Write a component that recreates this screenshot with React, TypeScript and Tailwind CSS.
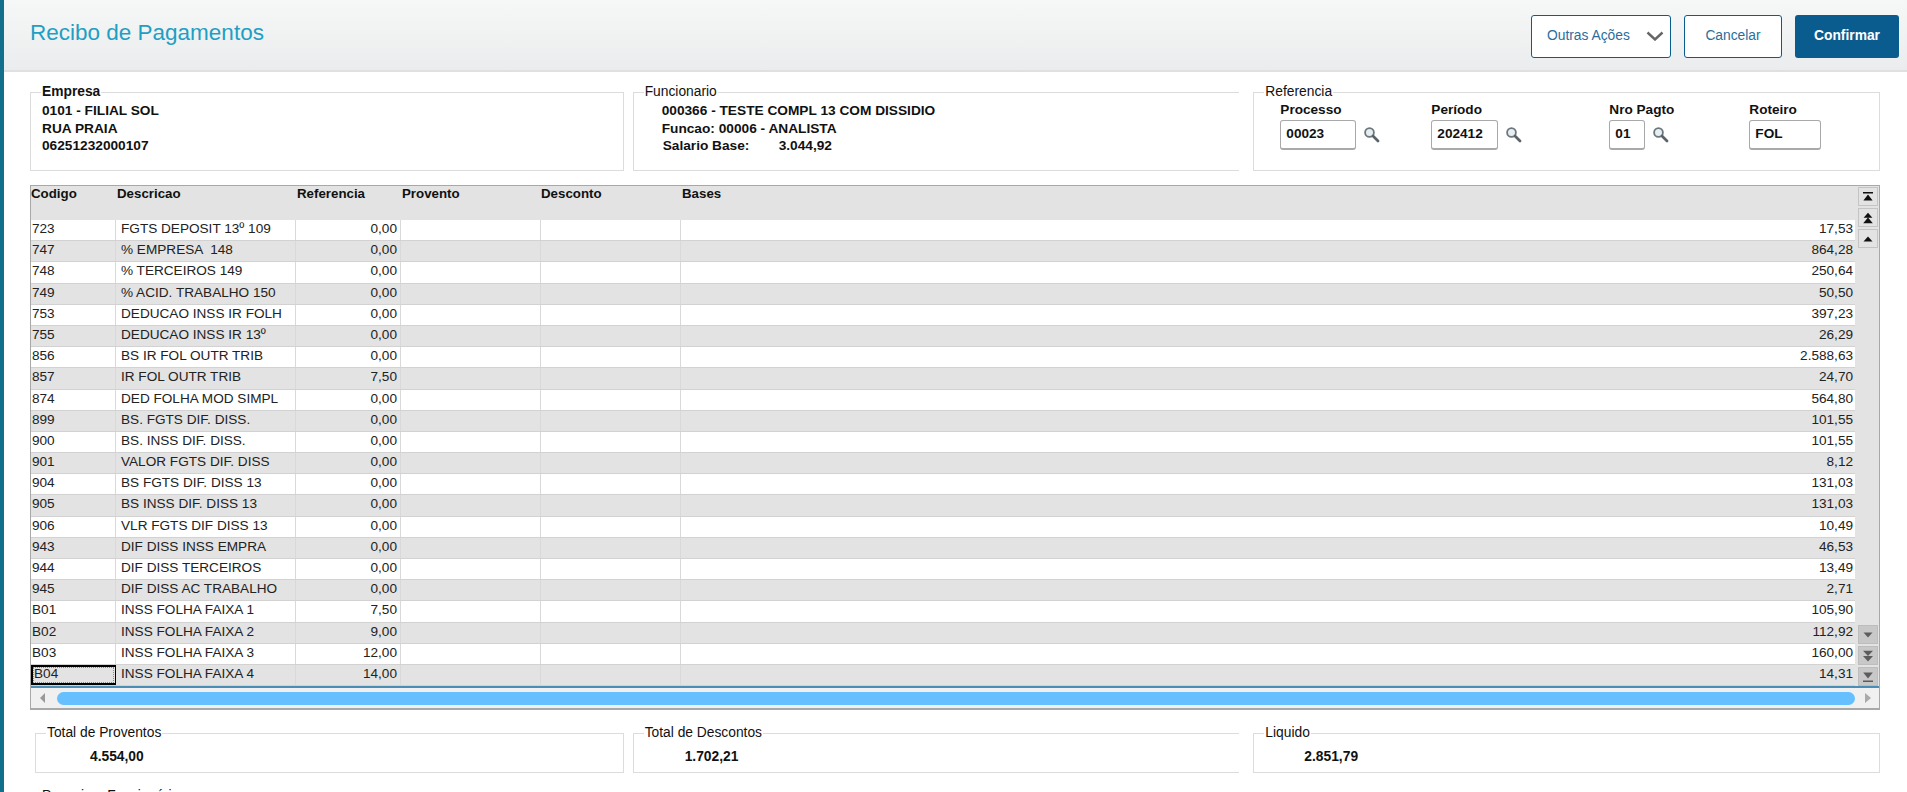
const rows = [
  ["723", "FGTS DEPOSIT 13º 109", "0,00", "17,53"],
  ["747", "% EMPRESA  148", "0,00", "864,28"],
  ["748", "% TERCEIROS 149", "0,00", "250,64"],
  ["749", "% ACID. TRABALHO 150", "0,00", "50,50"],
  ["753", "DEDUCAO INSS IR FOLH", "0,00", "397,23"],
  ["755", "DEDUCAO INSS IR 13º", "0,00", "26,29"],
  ["856", "BS IR FOL OUTR TRIB", "0,00", "2.588,63"],
  ["857", "IR FOL OUTR TRIB", "7,50", "24,70"],
  ["874", "DED FOLHA MOD SIMPL", "0,00", "564,80"],
  ["899", "BS. FGTS DIF. DISS.", "0,00", "101,55"],
  ["900", "BS. INSS DIF. DISS.", "0,00", "101,55"],
  ["901", "VALOR FGTS DIF. DISS", "0,00", "8,12"],
  ["904", "BS FGTS DIF. DISS 13", "0,00", "131,03"],
  ["905", "BS INSS DIF. DISS 13", "0,00", "131,03"],
  ["906", "VLR FGTS DIF DISS 13", "0,00", "10,49"],
  ["943", "DIF DISS INSS EMPRA", "0,00", "46,53"],
  ["944", "DIF DISS TERCEIROS", "0,00", "13,49"],
  ["945", "DIF DISS AC TRABALHO", "0,00", "2,71"],
  ["B01", "INSS FOLHA FAIXA 1", "7,50", "105,90"],
  ["B02", "INSS FOLHA FAIXA 2", "9,00", "112,92"],
  ["B03", "INSS FOLHA FAIXA 3", "12,00", "160,00"],
  ["B04", "INSS FOLHA FAIXA 4", "14,00", "14,31"],
];

const SearchIcon = () => (
  <svg width="17" height="17" viewBox="0 0 17 17" className="shrink-0 mb-[2px]">
    <circle cx="6.5" cy="6.5" r="4.4" fill="#e8edf0" stroke="#6b777f" strokeWidth="1.8" />
    <path d="M10 10l5 5" stroke="#5a6369" strokeWidth="2.8" strokeLinecap="round" />
  </svg>
);

const Box = ({
  title,
  bold,
  className,
  children,
}: {
  title: string;
  bold?: boolean;
  className: string;
  children: React.ReactNode;
}) => (
  <fieldset className={`border border-[#dcdcdc] ${className}`}>
    <legend className={`ml-[10px] px-[1px] text-[13.8px] leading-[14px] ${bold ? "font-bold" : ""}`}>{title}</legend>
    {children}
  </fieldset>
);

const Field = ({ label, value, width, icon, className }: { label: string; value: string; width: string; icon?: boolean; className: string }) => (
  <div className={className}>
    <div className="text-[13.6px] font-bold leading-[15px]">{label}</div>
    <div className="mt-[3px] flex items-center gap-[7px]">
      <div className={`flex h-[30px] items-center rounded-[3px] border border-[#a9a9a9] border-b-2 pl-[5px] text-[13.6px] font-bold ${width}`}>{value}</div>
      {icon && <SearchIcon />}
    </div>
  </div>
);

const ScrollBtn = ({ dim, children }: { dim?: boolean; children: React.ReactNode }) => (
  <div className={`flex h-[19px] w-[20px] items-center justify-center border ${dim ? "border-[#bdbdbd] bg-[#c8c8c8]" : "border-[#c4c4c4] bg-[#e3e3e3]"}`}>
    <svg width="12" height="12" viewBox="0 0 12 12" fill={dim ? "#5c5c5c" : "#111"}>{children}</svg>
  </div>
);

export default function App() {
  return (
    <div className="h-[792px] overflow-hidden border-l-[4px] border-[#13708c] bg-white font-['Liberation_Sans',Arial,sans-serif] text-[#111]">
      <header className="flex h-[72px] items-center justify-between border-b-2 border-[#dfe0e1] bg-gradient-to-b from-[#f6f7f7] to-[#ebeced] pl-[26px] pr-[8px]">
        <h1 className="pb-[3px] text-[22.5px] leading-none text-[#1e9fc4]">Recibo de Pagamentos</h1>
        <div className="flex gap-[13px] pt-[2px] text-[13.8px]">
          <button className="flex h-[43px] w-[140px] items-center rounded-[3px] border border-[#0b5c8e] bg-white pl-[15px] text-[#2a6e9c]">
            Outras Ações
            <svg width="18" height="10" viewBox="0 0 18 10" className="ml-[16px]">
              <path d="M1.5 1.5L9 8.5l7.5-7" fill="none" stroke="#666" strokeWidth="2.4" />
            </svg>
          </button>
          <button className="h-[43px] w-[98px] rounded-[3px] border border-[#0b5c8e] bg-white text-[#2a6e9c]">Cancelar</button>
          <button className="h-[43px] w-[104px] rounded-[3px] bg-[#0b5c8e] font-bold text-white">Confirmar</button>
        </div>
      </header>

      <div className="pl-[26px] pr-[27px]">
        <div className="mt-[13px] flex gap-[9px]">
          <Box title="Empresa" bold className="h-[86px] w-[594px]">
            <div className="mt-[3px] pl-[11px] text-[13.7px] font-bold leading-[17.5px]">
              <div>0101 - FILIAL SOL</div>
              <div>RUA PRAIA</div>
              <div>06251232000107</div>
            </div>
          </Box>
          <Box title="Funcionario" className="h-[86px] w-[607px] border-r-0">
            <div className="mt-[3px] pl-[28px] text-[13.7px] font-bold leading-[17.5px]">
              <div>000366 - TESTE COMPL 13 COM DISSIDIO</div>
              <div>Funcao: 00006 - ANALISTA</div>
              <div className="flex">
                <span className="w-[117px] pl-[1px]">Salario Base:</span>
                <span>3.044,92</span>
              </div>
            </div>
          </Box>
          <Box title="Referencia" className="ml-[5px] h-[86px] w-[627px]">
            <div className="flex pl-[26px] pt-[3px]">
              <Field label="Processo" value="00023" width="w-[76px]" icon className="w-[151px]" />
              <Field label="Período" value="202412" width="w-[67px]" icon className="w-[178px]" />
              <Field label="Nro Pagto" value="01" width="w-[36px]" icon className="w-[140px]" />
              <Field label="Roteiro" value="FOL" width="w-[72px]" className="w-[80px]" />
            </div>
          </Box>
        </div>

        <div className="mt-[14px] border border-[#a8a8a8] border-b-2 bg-[#e3e3e3]">
          <div className="flex">
            <div className="w-[1825px]">
              <div className="grid h-[34px] grid-cols-[85px_180px_105px_140px_140px_1fr] text-[13.3px] font-bold leading-[16px]">
                <div>Codigo</div>
                <div className="pl-[1px]">Descricao</div>
                <div className="pl-[1px]">Referencia</div>
                <div className="pl-[1px]">Provento</div>
                <div>Desconto</div>
                <div className="pl-[1px]">Bases</div>
              </div>
              {rows.map((r, i) => (
                <div
                  key={r[0]}
                  className={`grid h-[21.2px] grid-cols-[85px_180px_105px_140px_140px_1fr] border-b border-[#d2d2d2] text-[13.6px] leading-[17px] text-[#222] ${i % 2 ? "bg-[#e3e3e3]" : "bg-white"}`}
                >
                  <div className={`border-r border-[#d9d9d9] pl-[1px] ${r[0] === "B04" ? "border-2 border-black leading-[14px] outline-1 -outline-offset-3 outline-dotted outline-[#888]" : ""}`}>{r[0]}</div>
                  <div className="whitespace-pre border-r border-[#d9d9d9] pl-[5px]">{r[1]}</div>
                  <div className="border-r border-[#d9d9d9] pr-[3px] text-right">{r[2]}</div>
                  <div className="border-r border-[#d9d9d9]"></div>
                  <div className="border-r border-[#d9d9d9]"></div>
                  <div className="pr-[2px] text-right">{r[3]}</div>
                </div>
              ))}
            </div>
            <div className="flex w-[24px] flex-col justify-between pl-[3px] pt-[1px]">
              <div className="flex flex-col gap-[2px]">
                <ScrollBtn>
                  <path d="M1 1h10v1.6H1zM6 3.4l4.6 6H1.4z" />
                </ScrollBtn>
                <ScrollBtn>
                  <path d="M6 .8l4.4 5H1.6zM6 5.6l4.8 5.6H1.2z" />
                </ScrollBtn>
                <ScrollBtn>
                  <path d="M6 3.5l4.5 5h-9z" />
                </ScrollBtn>
              </div>
              <div className="flex flex-col gap-[2px]">
                <ScrollBtn dim>
                  <path d="M1.5 3.5h9L6 8.5z" />
                </ScrollBtn>
                <ScrollBtn dim>
                  <path d="M1 .8h10L6 6zM1 6h10l-5 5.4z" />
                </ScrollBtn>
                <ScrollBtn dim>
                  <path d="M1.2 1.6h9.6L6 7.4zM1 9.4h10V11H1z" />
                </ScrollBtn>
              </div>
            </div>
          </div>
          <div className="flex h-[22px] items-center border-t-2 border-[#4a8db5] bg-[#f0f0f0]">
            <svg width="26" height="12" viewBox="0 0 26 12" className="shrink-0">
              <path d="M14 1v10L9 6z" fill="#999" />
            </svg>
            <div className="h-[13px] w-[1799px] rounded-[7px] bg-[#66c0ff]"></div>
            <svg width="24" height="12" viewBox="0 0 24 12" className="shrink-0">
              <path d="M10 1v10l6-5z" fill="#aaa" />
            </svg>
          </div>
        </div>

        <div className="mt-[16px] flex gap-[9px] pl-[5px]">
          <Box title="Total de Proventos" className="h-[47px] w-[589px]">
            <div className="pl-[54px] pt-[9px] text-[13.8px] font-bold leading-[16px]">4.554,00</div>
          </Box>
          <Box title="Total de Descontos" className="h-[47px] w-[607px] border-r-0">
            <div className="pl-[51px] pt-[9px] text-[13.8px] font-bold leading-[16px]">1.702,21</div>
          </Box>
          <Box title="Liquido" className="ml-[5px] h-[47px] w-[627px]">
            <div className="pl-[50px] pt-[9px] text-[13.8px] font-bold leading-[16px]">2.851,79</div>
          </Box>
        </div>
        <div className="mt-[15px] pl-[12px] text-[13.8px] leading-[15px]">Pesquisar Funcionários</div>
      </div>
    </div>
  );
}
